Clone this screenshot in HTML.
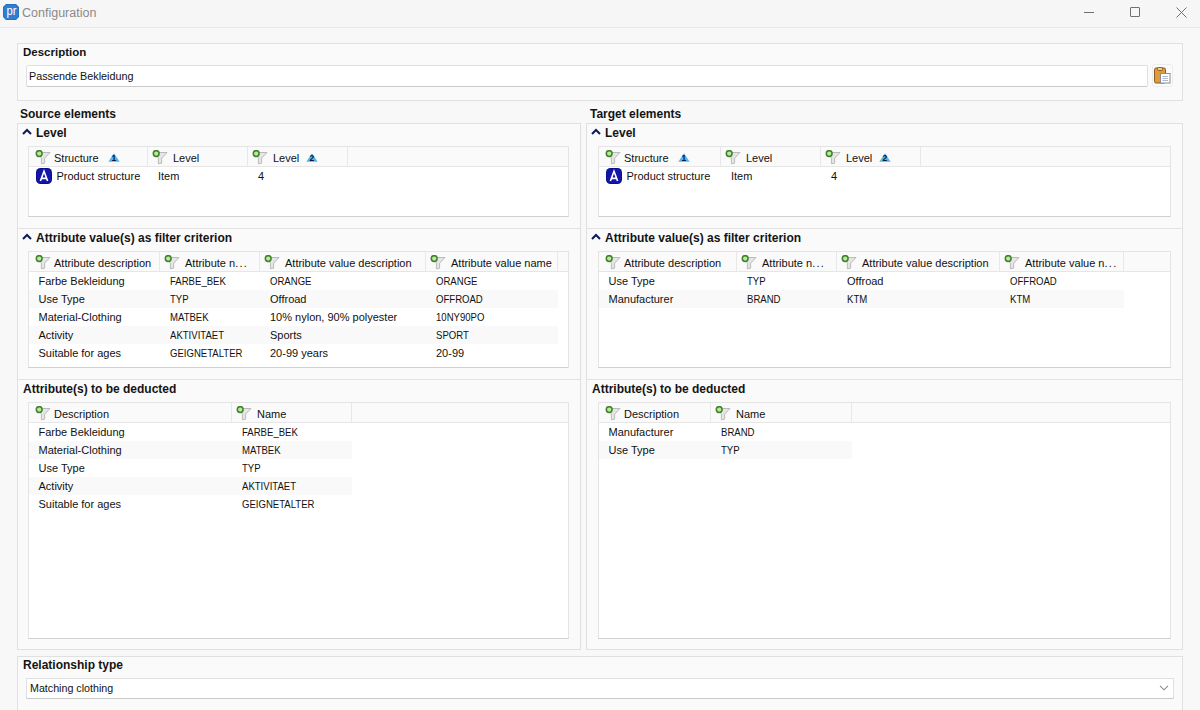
<!DOCTYPE html>
<html><head><meta charset="utf-8">
<style>
*{margin:0;padding:0;box-sizing:border-box}
html,body{width:1200px;height:710px;overflow:hidden;background:#f8f8f8;font-family:"Liberation Sans",sans-serif;font-size:11px;color:#111}
.a{position:absolute}
.t{position:absolute;white-space:nowrap;line-height:13px}
.b{font-weight:bold;font-size:12px;color:#141414}
.panel{position:absolute;border:1px solid #e0e0e0;background:#fafafa}
.box{position:absolute;border:1px solid #e4e4e4;border-bottom-color:#d0d0d0;background:#fff}
.sep{position:absolute;height:1px;background:#e2e2e2}
</style></head><body>
<div class="a" style="left:0;top:0;width:1200px;height:27px;background:#f6f6f6"></div>
<div class="a" style="left:0;top:27px;width:1200px;height:1px;background:#e8e8e8"></div>
<!-- logo -->
<svg class="a" style="left:3px;top:4px" width="16" height="16" viewBox="0 0 16 16"><path d="M3 0H13L16 3V13L13 16H3L0 13V3Z" fill="#2473c2"/><path d="M3.5 1H12.5L15 3.5V12.5L12.5 15H3.5L1 12.5V3.5Z" fill="#2e7fcf"/><text x="3.6" y="11.3" font-family="Liberation Sans" font-size="13.5" fill="#fff" textLength="10" lengthAdjust="spacingAndGlyphs">pr</text></svg>
<div class="t" style="left:22px;top:6px;font-size:12.5px;color:#8a8a8a;line-height:14px">Configuration</div>
<!-- window controls -->
<div class="a" style="left:1084px;top:12px;width:10px;height:1px;background:#707070"></div>
<div class="a" style="left:1130px;top:7px;width:10px;height:10px;border:1px solid #707070;border-radius:1px"></div>
<svg class="a" style="left:1176px;top:7px" width="11" height="11" viewBox="0 0 11 11"><path d="M0.5 0.5L10.5 10.5M10.5 0.5L0.5 10.5" stroke="#707070" stroke-width="1"/></svg>

<!-- outer vertical lines -->


<!-- Description panel -->
<div class="panel" style="left:17px;top:43px;width:1166px;height:58px"></div>
<div class="t" style="left:23px;top:46px;font-weight:bold;font-size:11.5px;color:#141414">Description</div>
<div class="a" style="left:26px;top:65px;width:1122px;height:22px;background:#fff;border:1px solid #e0e0e0;border-bottom-color:#c9c9c9;border-radius:2px"></div>
<div class="t" style="left:29px;top:70px;font-size:10.8px">Passende Bekleidung</div>
<div class="a" style="left:1152px;top:64px;width:21px;height:23px;background:#fbfbfb;border:1px solid #ececec;border-radius:3px"></div>
<svg class="a" style="left:1154px;top:67px" width="17" height="17" viewBox="0 0 17 17">
<rect x="0.5" y="1" width="11" height="15" rx="1.5" fill="#e39a3b" stroke="#8a5a22" stroke-width="1"/>
<rect x="3.5" y="0.5" width="5" height="3" rx="1" fill="#f1d27a" stroke="#6d4a1a" stroke-width="0.8"/>
<rect x="6.5" y="6.5" width="9.5" height="9.5" fill="#fff" stroke="#8c8c8c" stroke-width="1"/>
<path d="M8.5 9.5H14M8.5 11.5H14M8.5 13.5H14" stroke="#98a6c4" stroke-width="0.8"/>
</svg>

<!-- Source / Target -->
<div class="t b" style="left:20px;top:108px">Source elements</div>
<div class="panel" style="left:17px;top:123px;width:564px;height:527px"></div>
<div class="t b" style="left:590px;top:108px">Target elements</div>
<div class="panel" style="left:586px;top:123px;width:597px;height:527px"></div>

<svg class="a" style="left:22px;top:128px" width="10" height="7" viewBox="0 0 10 7"><path d="M1 6L5 2L9 6" fill="none" stroke="#0d1a5a" stroke-width="2"/></svg>
<div class="t b" style="left:36px;top:127px">Level</div>
<div class="box" style="left:28px;top:146px;width:541px;height:71px"></div>
<div class="a" style="left:29px;top:147px;width:539px;height:20px;background:#fafafa;border-bottom:1px solid #e6e6e6"></div>
<div class="a" style="left:147px;top:147px;width:1px;height:19px;background:#e8e8e8"></div>
<svg class="a" style="left:35px;top:150px" width="17" height="15" viewBox="0 0 17 15"><path d="M3 2.5H15L9.6 8.2V13.2L6.4 13.8V8.2Z" fill="#e6e6e6" stroke="#bababa" stroke-width="1" stroke-linejoin="round"/><circle cx="4.2" cy="3.6" r="2.9" fill="#b6eb9a" stroke="#437f2e" stroke-width="1.5"/></svg>
<div class="t" style="left:54px;top:152px">Structure</div>
<svg class="a" style="left:108px;top:153px" width="12" height="10" viewBox="0 0 12 10"><path d="M6 0.2L11.7 8.8H0.3Z" fill="#52b6ee"/><text x="5.9" y="8.2" font-family="Liberation Sans" font-size="8.5" font-weight="bold" fill="#0a1838" text-anchor="middle">1</text></svg>
<div class="a" style="left:247px;top:147px;width:1px;height:19px;background:#e8e8e8"></div>
<svg class="a" style="left:151.5px;top:150px" width="17" height="15" viewBox="0 0 17 15"><path d="M3 2.5H15L9.6 8.2V13.2L6.4 13.8V8.2Z" fill="#e6e6e6" stroke="#bababa" stroke-width="1" stroke-linejoin="round"/><circle cx="4.2" cy="3.6" r="2.9" fill="#b6eb9a" stroke="#437f2e" stroke-width="1.5"/></svg>
<div class="t" style="left:173px;top:152px">Level</div>
<div class="a" style="left:347px;top:147px;width:1px;height:19px;background:#e8e8e8"></div>
<svg class="a" style="left:251.5px;top:150px" width="17" height="15" viewBox="0 0 17 15"><path d="M3 2.5H15L9.6 8.2V13.2L6.4 13.8V8.2Z" fill="#e6e6e6" stroke="#bababa" stroke-width="1" stroke-linejoin="round"/><circle cx="4.2" cy="3.6" r="2.9" fill="#b6eb9a" stroke="#437f2e" stroke-width="1.5"/></svg>
<div class="t" style="left:273px;top:152px">Level</div>
<svg class="a" style="left:306px;top:153px" width="12" height="10" viewBox="0 0 12 10"><path d="M6 0.2L11.7 8.8H0.3Z" fill="#52b6ee"/><text x="5.9" y="8.2" font-family="Liberation Sans" font-size="8.5" font-weight="bold" fill="#0a1838" text-anchor="middle">2</text></svg>
<svg class="a" style="left:36px;top:168px" width="16" height="16" viewBox="0 0 16 16"><rect x="0" y="0" width="16" height="16" rx="4.5" fill="#0a0f8e"/><rect x="1" y="1" width="14" height="14" rx="3.5" fill="#1216a8"/><path d="M4.4 13L8 3.2L11.6 13M5.6 10.4H10.4" fill="none" stroke="#fff" stroke-width="1.6"/></svg>
<div class="t" style="left:56.5px;top:170px">Product structure</div>
<div class="t" style="left:158px;top:170px">Item</div>
<div class="t" style="left:258px;top:170px">4</div>
<div class="sep" style="left:18px;top:228px;width:562px"></div>
<svg class="a" style="left:22px;top:233px" width="10" height="7" viewBox="0 0 10 7"><path d="M1 6L5 2L9 6" fill="none" stroke="#0d1a5a" stroke-width="2"/></svg>
<div class="t b" style="left:36px;top:232px">Attribute value(s) as filter criterion</div>
<div class="box" style="left:28px;top:251px;width:541px;height:117px"></div>
<div class="a" style="left:29px;top:252px;width:539px;height:20px;background:#fafafa;border-bottom:1px solid #e6e6e6"></div>
<div class="a" style="left:159px;top:252px;width:1px;height:19px;background:#e8e8e8"></div>
<svg class="a" style="left:35px;top:255px" width="17" height="15" viewBox="0 0 17 15"><path d="M3 2.5H15L9.6 8.2V13.2L6.4 13.8V8.2Z" fill="#e6e6e6" stroke="#bababa" stroke-width="1" stroke-linejoin="round"/><circle cx="4.2" cy="3.6" r="2.9" fill="#b6eb9a" stroke="#437f2e" stroke-width="1.5"/></svg>
<div class="t" style="left:54px;top:257px">Attribute description</div>
<div class="a" style="left:259px;top:252px;width:1px;height:19px;background:#e8e8e8"></div>
<svg class="a" style="left:163.5px;top:255px" width="17" height="15" viewBox="0 0 17 15"><path d="M3 2.5H15L9.6 8.2V13.2L6.4 13.8V8.2Z" fill="#e6e6e6" stroke="#bababa" stroke-width="1" stroke-linejoin="round"/><circle cx="4.2" cy="3.6" r="2.9" fill="#b6eb9a" stroke="#437f2e" stroke-width="1.5"/></svg>
<div class="t" style="left:185px;top:257px">Attribute n<span style="letter-spacing:1.3px">...</span></div>
<div class="a" style="left:425px;top:252px;width:1px;height:19px;background:#e8e8e8"></div>
<svg class="a" style="left:263.5px;top:255px" width="17" height="15" viewBox="0 0 17 15"><path d="M3 2.5H15L9.6 8.2V13.2L6.4 13.8V8.2Z" fill="#e6e6e6" stroke="#bababa" stroke-width="1" stroke-linejoin="round"/><circle cx="4.2" cy="3.6" r="2.9" fill="#b6eb9a" stroke="#437f2e" stroke-width="1.5"/></svg>
<div class="t" style="left:285px;top:257px">Attribute value description</div>
<div class="a" style="left:557px;top:252px;width:1px;height:19px;background:#e8e8e8"></div>
<svg class="a" style="left:429.5px;top:255px" width="17" height="15" viewBox="0 0 17 15"><path d="M3 2.5H15L9.6 8.2V13.2L6.4 13.8V8.2Z" fill="#e6e6e6" stroke="#bababa" stroke-width="1" stroke-linejoin="round"/><circle cx="4.2" cy="3.6" r="2.9" fill="#b6eb9a" stroke="#437f2e" stroke-width="1.5"/></svg>
<div class="t" style="left:451px;top:257px">Attribute value name</div>
<div class="t" style="left:38.5px;top:275px">Farbe Bekleidung</div>
<div class="t" style="left:170px;top:275px;transform:scaleX(0.87);transform-origin:0 0">FARBE_BEK</div>
<div class="t" style="left:270px;top:275px;transform:scaleX(0.87);transform-origin:0 0">ORANGE</div>
<div class="t" style="left:436px;top:275px;transform:scaleX(0.87);transform-origin:0 0">ORANGE</div>
<div class="a" style="left:29px;top:290px;width:529px;height:18px;background:#f9f9f9"></div>
<div class="t" style="left:38.5px;top:293px">Use Type</div>
<div class="t" style="left:170px;top:293px;transform:scaleX(0.87);transform-origin:0 0">TYP</div>
<div class="t" style="left:270px;top:293px">Offroad</div>
<div class="t" style="left:436px;top:293px;transform:scaleX(0.87);transform-origin:0 0">OFFROAD</div>
<div class="t" style="left:38.5px;top:311px">Material-Clothing</div>
<div class="t" style="left:170px;top:311px;transform:scaleX(0.87);transform-origin:0 0">MATBEK</div>
<div class="t" style="left:270px;top:311px">10% nylon, 90% polyester</div>
<div class="t" style="left:436px;top:311px;transform:scaleX(0.87);transform-origin:0 0">10NY90PO</div>
<div class="a" style="left:29px;top:326px;width:529px;height:18px;background:#f9f9f9"></div>
<div class="t" style="left:38.5px;top:329px">Activity</div>
<div class="t" style="left:170px;top:329px;transform:scaleX(0.87);transform-origin:0 0">AKTIVITAET</div>
<div class="t" style="left:270px;top:329px">Sports</div>
<div class="t" style="left:436px;top:329px;transform:scaleX(0.87);transform-origin:0 0">SPORT</div>
<div class="t" style="left:38.5px;top:347px">Suitable for ages</div>
<div class="t" style="left:170px;top:347px;transform:scaleX(0.87);transform-origin:0 0">GEIGNETALTER</div>
<div class="t" style="left:270px;top:347px">20-99 years</div>
<div class="t" style="left:436px;top:347px">20-99</div>
<div class="sep" style="left:18px;top:379px;width:562px"></div>
<div class="t b" style="left:23px;top:383px">Attribute(s) to be deducted</div>
<div class="box" style="left:28px;top:402px;width:541px;height:237px"></div>
<div class="a" style="left:29px;top:403px;width:539px;height:20px;background:#fafafa;border-bottom:1px solid #e6e6e6"></div>
<div class="a" style="left:231px;top:403px;width:1px;height:19px;background:#e8e8e8"></div>
<svg class="a" style="left:35px;top:406px" width="17" height="15" viewBox="0 0 17 15"><path d="M3 2.5H15L9.6 8.2V13.2L6.4 13.8V8.2Z" fill="#e6e6e6" stroke="#bababa" stroke-width="1" stroke-linejoin="round"/><circle cx="4.2" cy="3.6" r="2.9" fill="#b6eb9a" stroke="#437f2e" stroke-width="1.5"/></svg>
<div class="t" style="left:54px;top:408px">Description</div>
<div class="a" style="left:351px;top:403px;width:1px;height:19px;background:#e8e8e8"></div>
<svg class="a" style="left:235.5px;top:406px" width="17" height="15" viewBox="0 0 17 15"><path d="M3 2.5H15L9.6 8.2V13.2L6.4 13.8V8.2Z" fill="#e6e6e6" stroke="#bababa" stroke-width="1" stroke-linejoin="round"/><circle cx="4.2" cy="3.6" r="2.9" fill="#b6eb9a" stroke="#437f2e" stroke-width="1.5"/></svg>
<div class="t" style="left:257px;top:408px">Name</div>
<div class="t" style="left:38.5px;top:426px">Farbe Bekleidung</div>
<div class="t" style="left:242px;top:426px;transform:scaleX(0.87);transform-origin:0 0">FARBE_BEK</div>
<div class="a" style="left:29px;top:441px;width:323px;height:18px;background:#f9f9f9"></div>
<div class="t" style="left:38.5px;top:444px">Material-Clothing</div>
<div class="t" style="left:242px;top:444px;transform:scaleX(0.87);transform-origin:0 0">MATBEK</div>
<div class="t" style="left:38.5px;top:462px">Use Type</div>
<div class="t" style="left:242px;top:462px;transform:scaleX(0.87);transform-origin:0 0">TYP</div>
<div class="a" style="left:29px;top:477px;width:323px;height:18px;background:#f9f9f9"></div>
<div class="t" style="left:38.5px;top:480px">Activity</div>
<div class="t" style="left:242px;top:480px;transform:scaleX(0.87);transform-origin:0 0">AKTIVITAET</div>
<div class="t" style="left:38.5px;top:498px">Suitable for ages</div>
<div class="t" style="left:242px;top:498px;transform:scaleX(0.87);transform-origin:0 0">GEIGNETALTER</div>
<svg class="a" style="left:591px;top:128px" width="10" height="7" viewBox="0 0 10 7"><path d="M1 6L5 2L9 6" fill="none" stroke="#0d1a5a" stroke-width="2"/></svg>
<div class="t b" style="left:605px;top:127px">Level</div>
<div class="box" style="left:598px;top:146px;width:573px;height:71px"></div>
<div class="a" style="left:599px;top:147px;width:571px;height:20px;background:#fafafa;border-bottom:1px solid #e6e6e6"></div>
<div class="a" style="left:720px;top:147px;width:1px;height:19px;background:#e8e8e8"></div>
<svg class="a" style="left:605px;top:150px" width="17" height="15" viewBox="0 0 17 15"><path d="M3 2.5H15L9.6 8.2V13.2L6.4 13.8V8.2Z" fill="#e6e6e6" stroke="#bababa" stroke-width="1" stroke-linejoin="round"/><circle cx="4.2" cy="3.6" r="2.9" fill="#b6eb9a" stroke="#437f2e" stroke-width="1.5"/></svg>
<div class="t" style="left:624px;top:152px">Structure</div>
<svg class="a" style="left:678px;top:153px" width="12" height="10" viewBox="0 0 12 10"><path d="M6 0.2L11.7 8.8H0.3Z" fill="#52b6ee"/><text x="5.9" y="8.2" font-family="Liberation Sans" font-size="8.5" font-weight="bold" fill="#0a1838" text-anchor="middle">1</text></svg>
<div class="a" style="left:820px;top:147px;width:1px;height:19px;background:#e8e8e8"></div>
<svg class="a" style="left:724.5px;top:150px" width="17" height="15" viewBox="0 0 17 15"><path d="M3 2.5H15L9.6 8.2V13.2L6.4 13.8V8.2Z" fill="#e6e6e6" stroke="#bababa" stroke-width="1" stroke-linejoin="round"/><circle cx="4.2" cy="3.6" r="2.9" fill="#b6eb9a" stroke="#437f2e" stroke-width="1.5"/></svg>
<div class="t" style="left:746px;top:152px">Level</div>
<div class="a" style="left:920px;top:147px;width:1px;height:19px;background:#e8e8e8"></div>
<svg class="a" style="left:824.5px;top:150px" width="17" height="15" viewBox="0 0 17 15"><path d="M3 2.5H15L9.6 8.2V13.2L6.4 13.8V8.2Z" fill="#e6e6e6" stroke="#bababa" stroke-width="1" stroke-linejoin="round"/><circle cx="4.2" cy="3.6" r="2.9" fill="#b6eb9a" stroke="#437f2e" stroke-width="1.5"/></svg>
<div class="t" style="left:846px;top:152px">Level</div>
<svg class="a" style="left:879px;top:153px" width="12" height="10" viewBox="0 0 12 10"><path d="M6 0.2L11.7 8.8H0.3Z" fill="#52b6ee"/><text x="5.9" y="8.2" font-family="Liberation Sans" font-size="8.5" font-weight="bold" fill="#0a1838" text-anchor="middle">2</text></svg>
<svg class="a" style="left:606px;top:168px" width="16" height="16" viewBox="0 0 16 16"><rect x="0" y="0" width="16" height="16" rx="4.5" fill="#0a0f8e"/><rect x="1" y="1" width="14" height="14" rx="3.5" fill="#1216a8"/><path d="M4.4 13L8 3.2L11.6 13M5.6 10.4H10.4" fill="none" stroke="#fff" stroke-width="1.6"/></svg>
<div class="t" style="left:626.5px;top:170px">Product structure</div>
<div class="t" style="left:731px;top:170px">Item</div>
<div class="t" style="left:831px;top:170px">4</div>
<div class="sep" style="left:587px;top:228px;width:595px"></div>
<svg class="a" style="left:591px;top:233px" width="10" height="7" viewBox="0 0 10 7"><path d="M1 6L5 2L9 6" fill="none" stroke="#0d1a5a" stroke-width="2"/></svg>
<div class="t b" style="left:605px;top:232px">Attribute value(s) as filter criterion</div>
<div class="box" style="left:598px;top:251px;width:573px;height:117px"></div>
<div class="a" style="left:599px;top:252px;width:571px;height:20px;background:#fafafa;border-bottom:1px solid #e6e6e6"></div>
<div class="a" style="left:736px;top:252px;width:1px;height:19px;background:#e8e8e8"></div>
<svg class="a" style="left:605px;top:255px" width="17" height="15" viewBox="0 0 17 15"><path d="M3 2.5H15L9.6 8.2V13.2L6.4 13.8V8.2Z" fill="#e6e6e6" stroke="#bababa" stroke-width="1" stroke-linejoin="round"/><circle cx="4.2" cy="3.6" r="2.9" fill="#b6eb9a" stroke="#437f2e" stroke-width="1.5"/></svg>
<div class="t" style="left:624px;top:257px">Attribute description</div>
<div class="a" style="left:836px;top:252px;width:1px;height:19px;background:#e8e8e8"></div>
<svg class="a" style="left:740.5px;top:255px" width="17" height="15" viewBox="0 0 17 15"><path d="M3 2.5H15L9.6 8.2V13.2L6.4 13.8V8.2Z" fill="#e6e6e6" stroke="#bababa" stroke-width="1" stroke-linejoin="round"/><circle cx="4.2" cy="3.6" r="2.9" fill="#b6eb9a" stroke="#437f2e" stroke-width="1.5"/></svg>
<div class="t" style="left:762px;top:257px">Attribute n<span style="letter-spacing:1.3px">...</span></div>
<div class="a" style="left:999px;top:252px;width:1px;height:19px;background:#e8e8e8"></div>
<svg class="a" style="left:840.5px;top:255px" width="17" height="15" viewBox="0 0 17 15"><path d="M3 2.5H15L9.6 8.2V13.2L6.4 13.8V8.2Z" fill="#e6e6e6" stroke="#bababa" stroke-width="1" stroke-linejoin="round"/><circle cx="4.2" cy="3.6" r="2.9" fill="#b6eb9a" stroke="#437f2e" stroke-width="1.5"/></svg>
<div class="t" style="left:862px;top:257px">Attribute value description</div>
<div class="a" style="left:1123px;top:252px;width:1px;height:19px;background:#e8e8e8"></div>
<svg class="a" style="left:1003.5px;top:255px" width="17" height="15" viewBox="0 0 17 15"><path d="M3 2.5H15L9.6 8.2V13.2L6.4 13.8V8.2Z" fill="#e6e6e6" stroke="#bababa" stroke-width="1" stroke-linejoin="round"/><circle cx="4.2" cy="3.6" r="2.9" fill="#b6eb9a" stroke="#437f2e" stroke-width="1.5"/></svg>
<div class="t" style="left:1025px;top:257px">Attribute value n<span style="letter-spacing:1.3px">...</span></div>
<div class="t" style="left:608.5px;top:275px">Use Type</div>
<div class="t" style="left:747px;top:275px;transform:scaleX(0.87);transform-origin:0 0">TYP</div>
<div class="t" style="left:847px;top:275px">Offroad</div>
<div class="t" style="left:1010px;top:275px;transform:scaleX(0.87);transform-origin:0 0">OFFROAD</div>
<div class="a" style="left:599px;top:290px;width:525px;height:18px;background:#f9f9f9"></div>
<div class="t" style="left:608.5px;top:293px">Manufacturer</div>
<div class="t" style="left:747px;top:293px;transform:scaleX(0.87);transform-origin:0 0">BRAND</div>
<div class="t" style="left:847px;top:293px;transform:scaleX(0.87);transform-origin:0 0">KTM</div>
<div class="t" style="left:1010px;top:293px;transform:scaleX(0.87);transform-origin:0 0">KTM</div>
<div class="sep" style="left:587px;top:379px;width:595px"></div>
<div class="t b" style="left:592px;top:383px">Attribute(s) to be deducted</div>
<div class="box" style="left:598px;top:402px;width:573px;height:237px"></div>
<div class="a" style="left:599px;top:403px;width:571px;height:20px;background:#fafafa;border-bottom:1px solid #e6e6e6"></div>
<div class="a" style="left:710px;top:403px;width:1px;height:19px;background:#e8e8e8"></div>
<svg class="a" style="left:605px;top:406px" width="17" height="15" viewBox="0 0 17 15"><path d="M3 2.5H15L9.6 8.2V13.2L6.4 13.8V8.2Z" fill="#e6e6e6" stroke="#bababa" stroke-width="1" stroke-linejoin="round"/><circle cx="4.2" cy="3.6" r="2.9" fill="#b6eb9a" stroke="#437f2e" stroke-width="1.5"/></svg>
<div class="t" style="left:624px;top:408px">Description</div>
<div class="a" style="left:851px;top:403px;width:1px;height:19px;background:#e8e8e8"></div>
<svg class="a" style="left:714.5px;top:406px" width="17" height="15" viewBox="0 0 17 15"><path d="M3 2.5H15L9.6 8.2V13.2L6.4 13.8V8.2Z" fill="#e6e6e6" stroke="#bababa" stroke-width="1" stroke-linejoin="round"/><circle cx="4.2" cy="3.6" r="2.9" fill="#b6eb9a" stroke="#437f2e" stroke-width="1.5"/></svg>
<div class="t" style="left:736px;top:408px">Name</div>
<div class="t" style="left:608.5px;top:426px">Manufacturer</div>
<div class="t" style="left:721px;top:426px;transform:scaleX(0.87);transform-origin:0 0">BRAND</div>
<div class="a" style="left:599px;top:441px;width:253px;height:18px;background:#f9f9f9"></div>
<div class="t" style="left:608.5px;top:444px">Use Type</div>
<div class="t" style="left:721px;top:444px;transform:scaleX(0.87);transform-origin:0 0">TYP</div>

<!-- Relationship -->
<div class="panel" style="left:17px;top:656px;width:1166px;height:60px"></div>
<div class="t b" style="left:23px;top:659px">Relationship type</div>
<div class="a" style="left:26px;top:678px;width:1148px;height:21px;background:#fff;border:1px solid #e0e0e0;border-bottom-color:#c9c9c9;border-radius:1px"></div>
<div class="t" style="left:30px;top:682px;font-size:10.7px">Matching clothing</div>
<svg class="a" style="left:1159px;top:685px" width="10" height="6" viewBox="0 0 10 6"><path d="M1 0.8L5 4.8L9 0.8" fill="none" stroke="#8a8a8a" stroke-width="1.1"/></svg>
</body></html>
